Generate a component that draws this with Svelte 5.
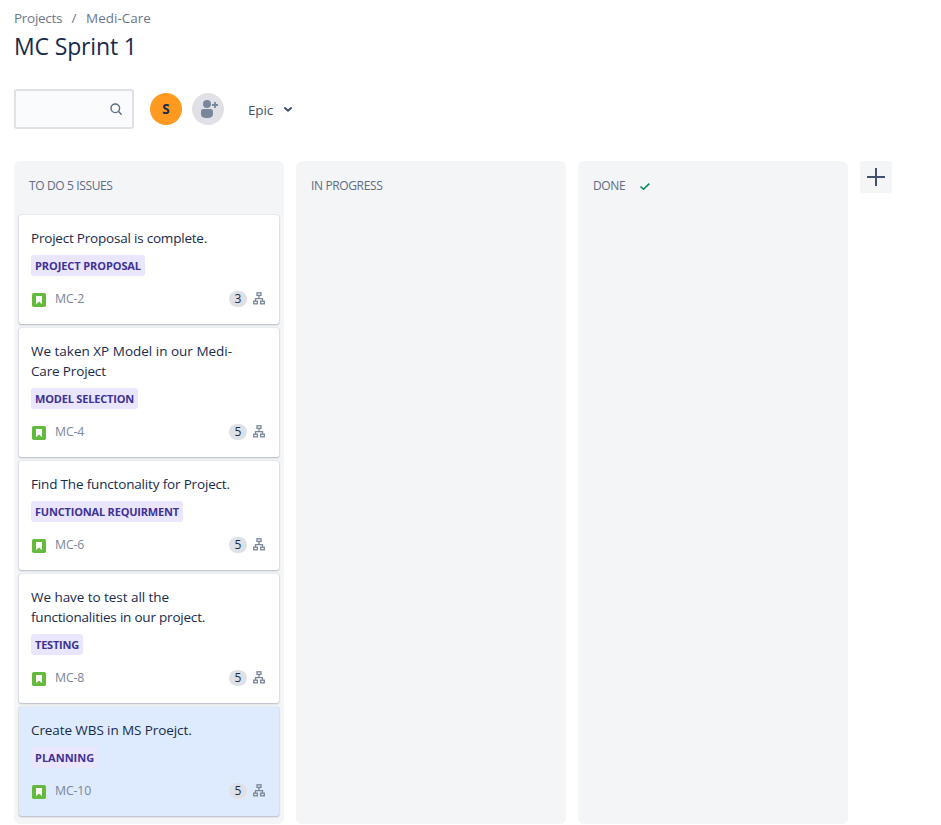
<script>
  const issues = [
    { key: 'MC-2', lines: [['Project Proposal is complete.', -0.21]], epic: ['PROJECT PROPOSAL', -0.09], points: 3 },
    { key: 'MC-4', lines: [['We taken XP Model in our Medi-', 0], ['Care Project', -0.15]], epic: ['MODEL SELECTION', -0.19], points: 5 },
    { key: 'MC-6', lines: [['Find The functonality for Project.', -0.17]], epic: ['FUNCTIONAL REQUIRMENT', -0.19], points: 5 },
    { key: 'MC-8', lines: [['We have to test all the', -0.05], ['functionalities in our project.', -0.21]], epic: ['TESTING', -0.22], points: 5 },
    { key: 'MC-10', lines: [['Create WBS in MS Proejct.', -0.09]], epic: ['PLANNING', 0], points: 5, selected: true }
  ];
</script>

<main>
  <nav><span class="root">Projects</span><i>/</i><span>Medi-Care</span></nav>
  <h1>MC Sprint 1</h1>
  <div class="tools">
    <div class="search">
      <svg width="24" height="24" viewBox="0 0 24 24" fill="none" stroke="#5e6c84" stroke-width="1.4"><circle cx="11.300" cy="11.300" r="4.300" /><path d="M14.500 14.500l2.700 2.700" stroke-linecap="round" /></svg>
    </div>
    <div class="avatar">S</div>
    <div class="add-person">
      <svg width="32" height="32" viewBox="0 0 32 32" fill="#7a869a"><circle cx="15" cy="11" r="4" /><path d="M9 18.500a2.500 2.500 0 0 1 2.500-2.500h7a2.500 2.500 0 0 1 2.500 2.500V21c0 3-2.500 4-6 4s-6-1-6-4z" /><path d="M20 12h6M23 9v6" stroke="#7a869a" stroke-width="1.800" /></svg>
    </div>
    <button class="epic"><span>Epic</span><svg width="10" height="7" viewBox="0 0 10 7" fill="none" stroke="#42526e" stroke-width="2" stroke-linecap="round" stroke-linejoin="round"><path d="M2 2l3 2.700L8 2" /></svg></button>
  </div>

  <div class="board">
    <section>
      <h2>TO DO 5 ISSUES</h2>
      <div class="cards">
        {#each issues as issue}
          <article class:selected={issue.selected}>
            <div class="summary">
              {#each issue.lines as [line, tracking]}<div style="letter-spacing: {tracking}px">{line}</div>{/each}
            </div>
            <div class="tag" style="letter-spacing: {issue.epic[1]}px">{issue.epic[0]}</div>
            <footer>
              <svg class="story" width="14" height="14" viewBox="0 0 14 14"><rect width="14" height="14" rx="1.800" fill="#63ba3c" /><path d="M4 3h6v8.300L7 8.600l-3 2.700z" fill="#fff" /></svg>
              <span class="key">{issue.key}</span>
              <span class="points">{issue.points}</span>
              <svg class="tree" width="12" height="13" viewBox="0 0 12 13" fill="none" stroke="#7a869a" stroke-width="1.300"><rect x="4" y="0.800" width="4" height="2.600" /><path d="M6 3.400v3M2.500 9V6.600h7V9" /><rect x="0.700" y="9.200" width="3.700" height="2.600" /><rect x="7.600" y="9.200" width="3.700" height="2.600" /></svg>
            </footer>
          </article>
        {/each}
      </div>
    </section>
    <section><h2>IN PROGRESS</h2></section>
    <section><h2>DONE<svg width="12" height="9" viewBox="0 0 12 9" fill="none" stroke="#00875a" stroke-width="1.500"><path d="M1.500 4.500l3 2.800L10.300 1.600" /></svg></h2></section>
    <button class="plus" aria-label="Add column"><svg width="18" height="18" viewBox="0 0 18 18" stroke="#42526e" stroke-width="2"><path d="M0 9h18M9 0v18" /></svg></button>
  </div>
</main>

<style>
  :global(body) { background: #fff; }
  main { box-sizing: border-box; width: 941px; height: 825px; overflow: hidden; padding: 8px 0 0 14px; font-family: 'Open Sans', 'Noto Sans', sans-serif; color: #172b4d; }
  nav { display: flex; height: 20px; line-height: 20px; font-size: 13.500px; color: #6b778c; }
  nav i { width: 24px; text-align: center; font-style: normal; }
  .root { width: 48px; letter-spacing: -0.280px; }
  h1 { margin: 4px 0 0; height: 28px; line-height: 28px; font-size: 23px; font-weight: 400; letter-spacing: -0.150px; }
  .tools { display: flex; align-items: center; height: 40px; margin-top: 29px; }
  .search { box-sizing: border-box; width: 120px; height: 40px; border: 2px solid #dfe1e6; border-radius: 3px; background: #fafbfc; display: flex; align-items: center; justify-content: flex-end; padding-right: 4px; }
  .avatar, .add-person { width: 32px; height: 32px; border-radius: 50%; }
  .avatar { margin-left: 16px; background: #ff991f; font-size: 13.500px; font-weight: 700; line-height: 32px; text-align: center; }
  .add-person { margin-left: 10px; background: #dfe1e6; }
  .add-person svg { display: block; }
  button { border: 0; padding: 0; background: none; font: inherit; }
  .epic { display: flex; align-items: center; margin-left: 24px; font-size: 13.500px; color: #42526e; gap: 10px; letter-spacing: -0.150px; }
  .epic span { padding-top: 2px; }
  .board { display: flex; gap: 12px; margin-top: 32px; align-items: flex-start; }
  section { width: 270px; height: 663px; border-radius: 6px; background: #f4f5f7; }
  h2 { display: flex; align-items: center; gap: 14px; margin: 0; height: 50px; padding-left: 15px; font-size: 12px; line-height: 16px; font-weight: 400; letter-spacing: -0.370px; color: #5e6c84; }
  .cards { display: flex; flex-direction: column; gap: 4px; padding: 4px 5px; }
  article { box-sizing: border-box; background: #fff; border-radius: 2px; padding: 13px 12px 17px; box-shadow: 0 1px 2px rgba(9, 30, 66, 0.25), 0 0 1px rgba(9, 30, 66, 0.31); }
  article.selected { background: #deebff; }
  .summary { font-size: 13.500px; line-height: 20px; white-space: nowrap; }
  .tag { width: fit-content; margin-top: 7px; height: 21px; line-height: 21px; padding: 0 4px; border-radius: 3px; background: #eae6ff; color: #403294; font-size: 11px; font-weight: 700; white-space: nowrap; }
  footer { display: flex; align-items: center; height: 16px; margin-top: 15px; }
  .story { margin: 2px 9px 0 1px; }
  .key { font-size: 12.300px; line-height: 16px; letter-spacing: -0.150px; color: #7a869a; }
  .points { margin: 0 6px 0 auto; width: 18px; height: 16px; line-height: 16px; border-radius: 8px; background: #dfe1e6; text-align: center; font-size: 12px; }
  .tree { margin: 0 2px 1px 0; }
  .plus { width: 32px; height: 32px; border-radius: 3px; background: #f4f5f7; display: flex; align-items: center; justify-content: center; }
</style>
